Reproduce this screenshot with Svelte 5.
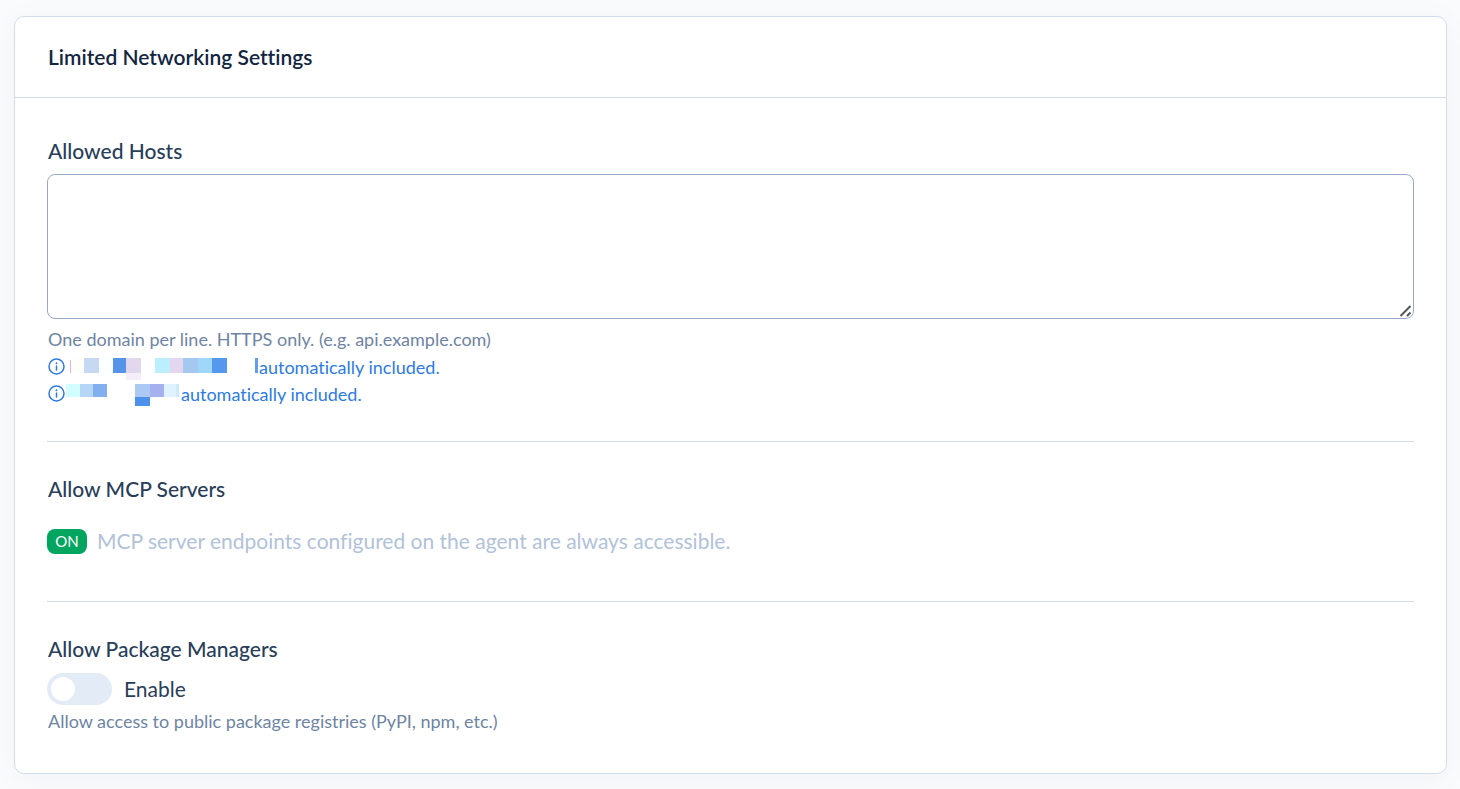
<script>
  let hosts = $state('');
  let packages = $state(false);

  // Redacted names: x, y, width, height, fill
  const notes = [
    {
      blocks: [
        [4, 6, 1, 13, '#e3b5e6'],
        [5, 4, 13, 15, '#fffffa'],
        [18, 4, 15, 15, '#c5d9f2'],
        [33, 4, 14, 15, '#fbffff'],
        [47, 4, 13, 15, '#5594e8'],
        [60, 4, 15, 15, '#e1d8ee'],
        [60, 19, 15, 7, '#f3eef7'],
        [89, 4, 15, 15, '#bceffe'],
        [104, 4, 13, 15, '#e4d6ee'],
        [117, 4, 15, 15, '#a5c8f1'],
        [132, 4, 14, 15, '#9fd7fa'],
        [146, 4, 15, 15, '#5599ef'],
        [189, 4, 3, 15, '#619fea']
      ],
      space: 193
    },
    {
      blocks: [
        [0, 3, 14, 13, '#d1ffff'],
        [14, 3, 13, 13, '#b5d6f6'],
        [27, 3, 14, 13, '#80b1ee'],
        [69, 3, 15, 13, '#abc9f2'],
        [84, 3, 14, 13, '#a5b1ef'],
        [98, 3, 12, 13, '#def3fd'],
        [110, 3, 3, 13, '#cdeafa'],
        [69, 16, 15, 9, '#4c92ed']
      ],
      space: 115
    }
  ];
</script>

<main>
  <section class="card">
    <header><h1>Limited Networking Settings</h1></header>
    <div class="body">
      <div class="group">
        <label class="title" for="hosts">Allowed Hosts</label>
        <textarea id="hosts" bind:value={hosts}></textarea>
        <p class="help">One domain per line. HTTPS only. (e.g. api.example.com)</p>
        <div class="notes">
          {#each notes as note}
            <p class="note">
              <svg class="info" width="18" height="18" viewBox="0 0 18 18" aria-hidden="true">
                <circle cx="8.5" cy="8.5" r="7.5" fill="none" stroke="currentColor" stroke-width="1.5" />
                <path d="M8.5 8v4" stroke="currentColor" stroke-width="1.5" stroke-linecap="round" />
                <circle cx="8.5" cy="5.3" r="0.95" fill="currentColor" />
              </svg>
              <svg width={note.space} height="27" shape-rendering="crispEdges" aria-hidden="true">
                {#each note.blocks as [x, y, w, h, fill]}
                  <rect {x} {y} width={w} height={h} {fill} />
                {/each}
              </svg>
              <span>automatically included.</span>
            </p>
          {/each}
        </div>
      </div>
      <hr />
      <div class="group">
        <h2 class="title">Allow MCP Servers</h2>
        <p class="status"><span class="badge">ON</span><span>MCP server endpoints configured on the agent are always accessible.</span></p>
      </div>
      <hr />
      <div class="group">
        <h2 class="title">Allow Package Managers</h2>
        <label class="switch">
          <input type="checkbox" role="switch" bind:checked={packages} />
          <span>Enable</span>
        </label>
        <p class="help">Allow access to public package registries (PyPI, npm, etc.)</p>
      </div>
    </div>
  </section>
</main>

<style>
  :global(body) {
    margin: 0;
    background: #f9fbfd;
  }
  main {
    padding: 16px 13px 15px 14px;
    font-family: Lato, sans-serif;
    font-size: 21px;
    font-variant-ligatures: none;
    line-height: 30px;
    color: #283e59;
  }
  .card {
    background: #fff;
    border: 1px solid #d2ddec;
    border-radius: 10px;
    box-shadow: 0 4px 32px rgba(18, 38, 63, 0.04);
  }
  header {
    padding: 25px 33px;
    border-bottom: 1px solid #d2ddec;
  }
  h1,
  h2,
  p {
    margin: 0;
  }
  h1 {
    font-size: 21px;
    font-weight: 600;
    line-height: 30px;
    color: #12263f;
  }
  .body {
    padding: 38px 32px;
  }
  .title {
    display: block;
    padding-left: 1px;
    font-size: 21px;
    font-weight: 500;
    line-height: 30px;
  }
  textarea {
    display: block;
    box-sizing: border-box;
    width: 100%;
    height: 145px;
    margin: 8px 0 7px;
    padding: 12px 16px;
    border: 1px solid #95aac9;
    border-radius: 8px;
    background: #fff;
    color: inherit;
    font: inherit;
    resize: vertical;
  }
  textarea::-webkit-resizer {
    background: url("data:image/svg+xml,%3Csvg xmlns='http://www.w3.org/2000/svg' width='15' height='15'%3E%3Cpath d='M2.5 13L12.5 3M9 13L12.5 9.5' stroke='%23555' stroke-width='2'/%3E%3C/svg%3E") no-repeat right bottom;
  }
  .help {
    padding-left: 1px;
    font-size: 18px;
    line-height: 27px;
    color: #6e84a3;
  }
  .notes {
    padding-top: 1px;
  }
  .note {
    display: flex;
    padding-left: 1px;
    font-size: 18px;
    line-height: 27px;
    color: #2c7be5;
  }
  .info {
    margin-top: 4px;
  }
  hr {
    height: 1px;
    margin: 33px 0 32px;
    border: 0;
    background: #d2ddec;
  }
  .status {
    display: flex;
    align-items: center;
    gap: 10px;
    padding: 22px 0 12px;
    color: #b1c2d9;
  }
  .badge {
    box-sizing: border-box;
    min-width: 40px;
    padding: 0 8px;
    border-radius: 8px;
    background: #00a65f;
    color: #fff;
    font-size: 15px;
    line-height: 25px;
    text-align: center;
  }
  .switch {
    display: flex;
    align-items: center;
    gap: 12px;
    margin: 9px 0 3px;
    width: max-content;
  }
  .switch input {
    appearance: none;
    width: 65px;
    height: 32px;
    margin: 0;
    padding: 4px;
    border-radius: 16px;
    background: #e3ebf6;
  }
  .switch input::before {
    content: '';
    display: block;
    width: 24px;
    height: 24px;
    border-radius: 50%;
    background: #fff;
  }
  .switch input:checked {
    background: #2c7be5;
  }
  .switch input:checked::before {
    margin-left: 33px;
  }
</style>
